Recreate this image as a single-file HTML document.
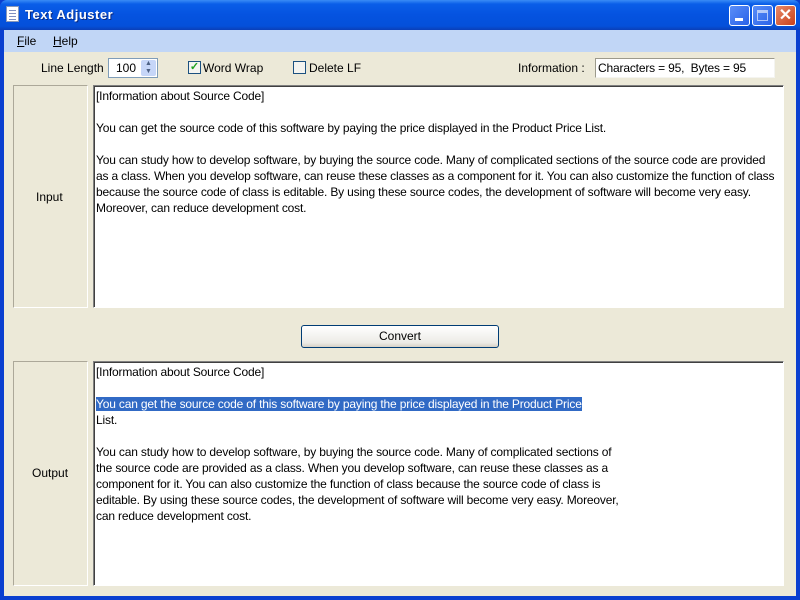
<!DOCTYPE html>
<html><head><meta charset="utf-8"><style>
*{margin:0;padding:0;box-sizing:border-box}
body{width:800px;height:600px;overflow:hidden;background:#0a3fd0;font-family:"Liberation Sans",sans-serif;font-size:12px;color:#000;position:relative}
.title{position:absolute;left:0;top:0;width:800px;height:30px;background:linear-gradient(#3a8cf6 0,#0a5ee8 4px,#0553e0 15px,#0450da 26px,#0a3fb8 30px);border-radius:7px 7px 0 0}
.title .t{position:absolute;left:25px;top:7px;color:#fff;font-weight:bold;font-size:13px;letter-spacing:0.5px;text-shadow:1px 1px #0a2a80}
.icon{position:absolute;left:6px;top:6px;width:13px;height:16px;background:#fff;border:1px solid #8898b8}
.icon i{position:absolute;left:2px;width:7px;height:1px;background:#8090c0}
.btn{position:absolute;top:5px;width:21px;height:21px;border:1px solid #fff;border-radius:3px;background:linear-gradient(135deg,#5a8ef8,#2a62e8)}
.frame{position:absolute;left:4px;top:30px;width:792px;height:566px;background:#ece9d8}
.menu{position:absolute;left:0;top:0;width:792px;height:22px;background:#c1d6f6}
.menu span{position:absolute;top:4px}
.lbl{position:absolute}
.panel{position:absolute;border:1px solid;border-color:#aca899 #fff #fff #aca899;background:#ece9d8}
.ta{position:absolute;background:#fff;border:1px solid;border-color:#808080 #fff #fff #808080;box-shadow:inset 1px 1px #404040;overflow:hidden}
.ta pre{font-family:"Liberation Sans",sans-serif;font-size:12px;letter-spacing:-0.17px;line-height:16px;position:absolute;left:2px;top:2px;white-space:pre}
</style></head><body>
<div class="title"><div class="icon"><i style="top:3px"></i><i style="top:6px"></i><i style="top:9px"></i><i style="top:12px"></i></div><div class="t">Text Adjuster</div>
<div class="btn" style="left:729px"><div style="position:absolute;left:5px;top:12px;width:8px;height:3px;background:#fff"></div></div>
<div class="btn" style="left:752px"><div style="position:absolute;left:4px;top:4px;width:11px;height:11px;border:1px solid #fff;border-top-width:3px;opacity:.6"></div></div>
<div class="btn" style="left:775px;background:linear-gradient(135deg,#e88a6a,#c8401a);color:#fff;font-weight:bold;font-size:16px;text-align:center;line-height:19px">✕</div>
</div>
<div class="frame">
<div class="menu"><span style="left:13px"><u>F</u>ile</span><span style="left:49px"><u>H</u>elp</span></div>
<div class="lbl" style="left:37px;top:31px">Line Length</div>
<div style="position:absolute;left:104px;top:28px;width:50px;height:20px;background:#fff;border:1px solid #7f9db9"><span style="position:absolute;left:7px;top:2px">100</span><div style="position:absolute;right:1px;top:1px;width:15px;height:16px;background:#c6d6f8;border-radius:2px;font-size:7px;line-height:8px;text-align:center;color:#4d6185">▲<br>▼</div></div>
<div style="position:absolute;left:184px;top:31px;width:13px;height:13px;border:1px solid #1c5180;background:#f4f4f0;color:#21a121;font-size:11px;line-height:11px;text-align:center;font-weight:bold">✓</div>
<div class="lbl" style="left:199px;top:31px">Word Wrap</div>
<div style="position:absolute;left:289px;top:31px;width:13px;height:13px;border:1px solid #1c5180;background:#f4f4f0"></div>
<div class="lbl" style="left:305px;top:31px">Delete LF</div>
<div class="lbl" style="left:514px;top:31px">Information :</div>
<div style="position:absolute;left:591px;top:28px;width:180px;height:20px;background:#fff;border:1px solid #9c9a8c;border-right-color:#f4f4f0;border-bottom-color:#f4f4f0"><span style="position:absolute;left:2px;top:2px;letter-spacing:-0.17px">Characters = 95,&nbsp; Bytes = 95</span></div>

<div class="panel" style="left:9px;top:55px;width:75px;height:223px"><span style="position:absolute;left:22px;top:104px">Input</span></div>
<div class="ta" style="left:89px;top:55px;width:691px;height:223px"><pre>[Information about Source Code]

You can get the source code of this software by paying the price displayed in the Product Price List.

You can study how to develop software, by buying the source code. Many of complicated sections of the source code are provided
as a class. When you develop software, can reuse these classes as a component for it. You can also customize the function of class
because the source code of class is editable. By using these source codes, the development of software will become very easy.
Moreover, can reduce development cost.</pre></div>

<div style="position:absolute;left:297px;top:295px;width:198px;height:23px;border:1px solid #003c74;border-radius:3px;background:linear-gradient(#fff,#ecebe6 80%,#d6d0c5);text-align:center;line-height:20px">Convert</div>

<div class="panel" style="left:9px;top:331px;width:75px;height:225px"><span style="position:absolute;left:18px;top:104px">Output</span></div>
<div class="ta" style="left:89px;top:331px;width:691px;height:225px"><pre>[Information about Source Code]

<span style="background:#316ac5;color:#fff">You can get the source code of this software by paying the price displayed in the Product Price</span>
List.

You can study how to develop software, by buying the source code. Many of complicated sections of
the source code are provided as a class. When you develop software, can reuse these classes as a
component for it. You can also customize the function of class because the source code of class is
editable. By using these source codes, the development of software will become very easy. Moreover,
can reduce development cost.</pre></div>
</div>
</body></html>
